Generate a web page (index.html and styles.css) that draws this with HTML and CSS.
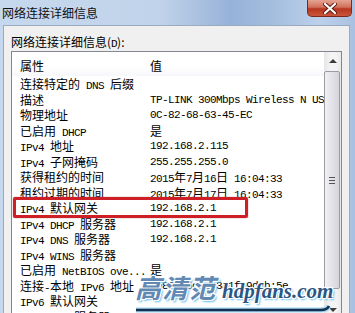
FILE: index.html
```html
<!DOCTYPE html>
<html lang="zh-CN">
<head>
    <meta charset="UTF-8" />
    <meta name="viewport" content="width=device-width, initial-scale=1.0"/>
    <title>网络连接详细信息</title>
    <link rel="stylesheet" href="styles.css">
</head>
<body>
    <div class="window">
        <div class="titlebar">
            <span class="title">网络连接详细信息</span>
            <div class="close">
                <svg width="14" height="11" viewBox="0 0 14 11">
                    <path d="M2 1 L12 10 M12 1 L2 10" stroke="#5a1a10" stroke-width="4" stroke-linecap="round"/>
                    <path d="M2 1 L12 10 M12 1 L2 10" stroke="#fff" stroke-width="2.2" stroke-linecap="round"/>
                </svg>
            </div>
        </div>

        <div class="panel">
            <div class="label">网络连接详细信息(<span class="en">D</span>):</div>
            <div class="list">
                <div class="list-main">
                    <div class="header">
                        <span class="c1">属性</span>
                        <span class="c2">值</span>
                    </div>
                    <div class="rows">
                        <div class="row"><span class="c1">连接特定的<span class="en"> DNS </span>后缀</span><span class="c2"></span></div>
                        <div class="row"><span class="c1">描述</span><span class="c2 en">TP-LINK 300Mbps Wireless N USB</span></div>
                        <div class="row"><span class="c1">物理地址</span><span class="c2 en">0C-82-68-63-45-EC</span></div>
                        <div class="row"><span class="c1">已启用<span class="en"> DHCP</span></span><span class="c2">是</span></div>
                        <div class="row"><span class="c1"><span class="en">IPv4 </span>地址</span><span class="c2 en">192.168.2.115</span></div>
                        <div class="row"><span class="c1"><span class="en">IPv4 </span>子网掩码</span><span class="c2 en">255.255.255.0</span></div>
                        <div class="row"><span class="c1">获得租约的时间</span><span class="c2"><span class="en">2015</span>年<span class="en">7</span>月<span class="en">16</span>日<span class="en"> 16:04:33</span></span></div>
                        <div class="row"><span class="c1">租约过期的时间</span><span class="c2"><span class="en">2015</span>年<span class="en">7</span>月<span class="en">17</span>日<span class="en"> 16:04:33</span></span></div>
                        <div class="row"><span class="c1"><span class="en">IPv4 </span>默认网关</span><span class="c2 en">192.168.2.1</span></div>
                        <div class="row"><span class="c1"><span class="en">IPv4 DHCP </span>服务器</span><span class="c2 en">192.168.2.1</span></div>
                        <div class="row"><span class="c1"><span class="en">IPv4 DNS </span>服务器</span><span class="c2 en">192.168.2.1</span></div>
                        <div class="row"><span class="c1"><span class="en">IPv4 WINS </span>服务器</span><span class="c2"></span></div>
                        <div class="row"><span class="c1">已启用<span class="en"> NetBIOS ove...</span></span><span class="c2">是</span></div>
                        <div class="row"><span class="c1">连接<span class="en">-</span>本地<span class="en"> IPv6 </span>地址</span><span class="c2 en">fe80::6c0e:3a1f:9d2b:5e</span></div>
                        <div class="row"><span class="c1"><span class="en">IPv6 </span>默认网关</span><span class="c2"></span></div>
                        <div class="row"><span class="c1"><span class="en">IPv6 DNS </span>服务器</span><span class="c2"></span></div>

                        <!-- red mark around the gateway row -->
                        <div class="mark"></div>
                    </div>
                </div>
                <div class="scrollbar">
                    <div class="arrow up"><span class="tri-up"></span></div>
                    <div class="thumb"><span class="grip"></span></div>
                    <div class="track"></div>
                    <div class="arrow down"><span class="tri-down"></span></div>
                </div>
            </div>
        </div>

        <div class="watermark">
            <span class="wm-cn">高清范</span><span class="wm-en">hdpfans.com</span>
            <svg class="wm-line" width="196" height="10" viewBox="0 0 196 10">
                <path d="M1 5 L186 5 Q192 5 194 1" fill="none" stroke="#9fd6f2" stroke-width="5"/>
                <path d="M1 5 L186 5 Q192 5 194 1" fill="none" stroke="#16304f" stroke-width="2.6"/>
            </svg>
        </div>
    </div>
</body>
</html>
```

FILE: styles.css
```css
* {
    box-sizing: border-box;
}
body {
    margin: 0;
    font-family: "Noto Sans CJK SC", sans-serif;
    font-size: 12px;
    color: #000;
}
.window {
    position: relative;
    width: 355px;
    height: 313px;
    overflow: hidden;
    display: flex;
    flex-direction: column;
    background: linear-gradient(to right, #c6d8ed 0%, #c1d3ea 45%, #97b2d8 65%, #a6bfe0 78%, #bcd0ea 90%, #a9c1e2 100%);
}
.titlebar {
    height: 26px;
    display: flex;
    justify-content: space-between;
    align-items: flex-start;
    padding-left: 2px;
}
.title {
    line-height: 25px;
    color: #111;
}
.close {
    width: 45px;
    height: 17px;
    margin-right: 3px;
    border: 1px solid #7a2a1c;
    border-top: none;
    border-radius: 0 0 5px 5px;
    background: linear-gradient(#e6a493 0%, #d0705a 45%, #b8361f 55%, #c8563a 100%);
    display: flex;
    justify-content: center;
    align-items: center;
}
.panel {
    flex: 1;
    margin: 0 5px 0 3px;
    background: #f0f0f0;
    border: 1px solid #9aabbf;
    border-bottom: none;
    padding: 8px 7px 0 7px;
}
.label {
    height: 16px;
    line-height: 16px;
    margin-bottom: 1px;
}
.en {
    font-family: "Liberation Mono", "Noto Sans CJK SC", monospace;
    font-size: 11px;
    letter-spacing: -0.6px;
    white-space: pre;
}
.list {
    height: 268px;
    border: 1px solid #828790;
    background: #fff;
    display: flex;
}
.list-main {
    flex: 1;
    overflow: hidden;
}
.header {
    height: 24px;
    display: flex;
    align-items: center;
    padding-top: 3px;
    background: linear-gradient(#fff 0%, #fff 60%, #f6f7f9 100%);
}
.c1 {
    width: 138px;
    flex-shrink: 0;
    padding-left: 8px;
    white-space: nowrap;
}
.c2 {
    white-space: pre;
}
.rows {
    position: relative;
}
.row {
    display: flex;
    height: 15.5px;
    line-height: 16px;
    white-space: nowrap;
}
.mark {
    position: absolute;
    left: 1px;
    top: 121px;
    width: 235px;
    height: 21px;
    border: 3px solid #cf1f26;
    border-radius: 2px;
    box-shadow: 0 0 1px #7a0f12;
}
.scrollbar {
    width: 17px;
    display: flex;
    flex-direction: column;
    background: linear-gradient(to right, #e6e6e6, #f4f4f4 40%, #f4f4f4 70%, #e9e9e9);
}
.arrow {
    height: 17px;
    display: flex;
    justify-content: center;
    align-items: center;
}
.tri-up {
    border-left: 4px solid transparent;
    border-right: 4px solid transparent;
    border-bottom: 4px solid #3c3c3c;
}
.tri-down {
    border-left: 4px solid transparent;
    border-right: 4px solid transparent;
    border-top: 4px solid #3c3c3c;
}
.thumb {
    height: 218px;
    margin: 2px 1px 0 0;
    border: 1px solid #9b9ba6;
    border-radius: 2px;
    background: linear-gradient(to right, #f2f2f4, #e2e2e8 50%, #d4d4dc);
    display: flex;
    justify-content: center;
    align-items: center;
}
.grip {
    width: 6px;
    height: 7px;
    background: linear-gradient(#555 0 1px, transparent 1px 3px, #555 3px 4px, transparent 4px 6px, #555 6px 7px);
}
.track {
    flex: 1;
}
.watermark {
    position: absolute;
    left: 135px;
    top: 272px;
    width: 200px;
}
.wm-cn {
    font-family: "Noto Sans CJK SC", sans-serif;
    font-weight: bold;
    font-style: italic;
    font-size: 26px;
    letter-spacing: 1px;
    line-height: 30px;
    color: #6189b3;
    text-shadow: -1px -1px 0 #fff, 1px -1px 0 #fff, -1px 1px 0 #fff, 1px 1px 0 #fff, 2px 2px 2px #5fbdea;
}
.wm-en {
    margin-left: 6px;
    font-family: "Liberation Serif", serif;
    font-weight: bold;
    font-style: italic;
    font-size: 21px;
    line-height: 30px;
    color: #2d5582;
    text-shadow: -1px -1px 0 #fff, 1px -1px 0 #fff, -1px 1px 0 #fff, 1px 1px 0 #fff, 2px 2px 2px #5fbdea;
}
.wm-line {
    display: block;
    margin-top: -1px;
}
```
